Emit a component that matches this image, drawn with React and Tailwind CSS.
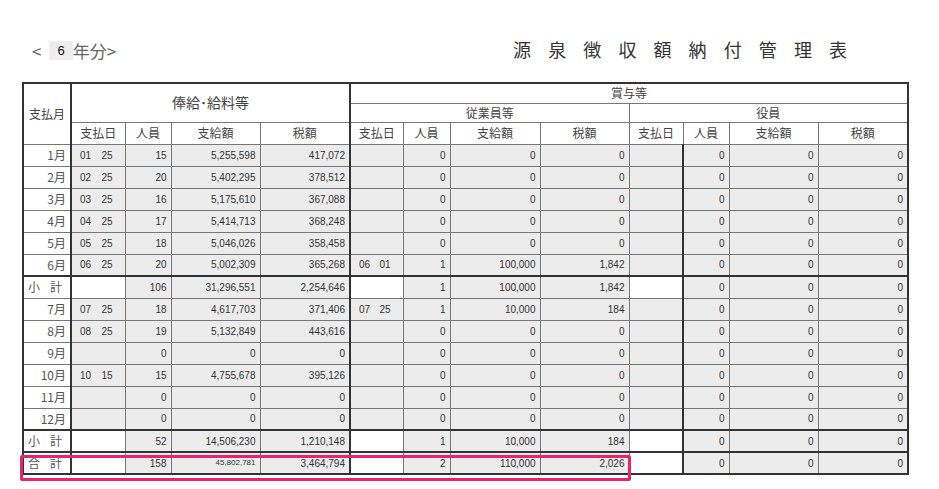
import React from "react";

const cols = [48, 54, 46, 89, 90, 53, 47, 90, 89, 54, 46, 89, 90];

const rows = [
  ["1月", "01", "25", "15", "5,255,598", "417,072", "", "", "0", "0", "0"],
  ["2月", "02", "25", "20", "5,402,295", "378,512", "", "", "0", "0", "0"],
  ["3月", "03", "25", "16", "5,175,610", "367,088", "", "", "0", "0", "0"],
  ["4月", "04", "25", "17", "5,414,713", "368,248", "", "", "0", "0", "0"],
  ["5月", "05", "25", "18", "5,046,026", "358,458", "", "", "0", "0", "0"],
  ["6月", "06", "25", "20", "5,002,309", "365,268", "06", "01", "1", "100,000", "1,842"],
  ["小 計", "", "", "106", "31,296,551", "2,254,646", "", "", "1", "100,000", "1,842", "sub"],
  ["7月", "07", "25", "18", "4,617,703", "371,406", "07", "25", "1", "10,000", "184"],
  ["8月", "08", "25", "19", "5,132,849", "443,616", "", "", "0", "0", "0"],
  ["9月", "", "", "0", "0", "0", "", "", "0", "0", "0"],
  ["10月", "10", "15", "15", "4,755,678", "395,126", "", "", "0", "0", "0"],
  ["11月", "", "", "0", "0", "0", "", "", "0", "0", "0"],
  ["12月", "", "", "0", "0", "0", "", "", "0", "0", "0"],
  ["小 計", "", "", "52", "14,506,230", "1,210,148", "", "", "1", "10,000", "184", "sub"],
  ["合 計", "", "", "158", "45,802,781", "3,464,794", "", "", "2", "110,000", "2,026", "sub"],
];

const jp = { fontFamily: '"Noto Sans CJK JP", sans-serif' };
const num = { fontFamily: '"Liberation Sans", Arial, sans-serif' };

function Day({ a, b, white }) {
  return (
    <td className={`border border-[#777] px-2 text-left ${white ? "bg-white" : "bg-[#ececec]"}`}>
      {a && (
        <span className="flex justify-between pr-1">
          <span>{a}</span>
          <span>{b}</span>
        </span>
      )}
    </td>
  );
}

function N({ v, small, thickRight }) {
  return (
    <td className={`border border-[#777] bg-[#ececec] pr-1 text-right ${small ? "text-[8px]" : ""} ${thickRight ? "border-r-2 border-r-[#333]" : ""}`}>
      {v}
    </td>
  );
}

export default function App() {
  const th = "border border-[#777] font-normal text-[12px] text-[#444] bg-white";
  return (
    <div className="relative h-[489px] w-[939px] bg-white text-[#333]">
      <div className="flex items-end pt-[36px] pl-[32px]">
        <div className="flex items-center text-[17px] text-[#666]" style={jp}>
          <span>&lt;</span>
          <span className="ml-[8px] bg-[#eee] px-[8px] text-[13px] text-[#111]" style={num}>6</span>
          <span>年分&gt;</span>
        </div>
        <div className="ml-[397px] text-[18px] tracking-[0.95em] text-[#333]" style={jp}>源泉徴収額納付管理表</div>
      </div>

      <table className="ml-[22px] mt-[19px] table-fixed border-collapse border-2 border-[#333] text-[10px]" style={num}>
        <colgroup>
          {cols.map((w, i) => (
            <col key={i} style={{ width: w }} />
          ))}
        </colgroup>
        <thead style={jp}>
          <tr className="h-[20px]">
            <th rowSpan={3} className={`${th} border-r-2 border-r-[#333] text-[11px]`}>支払月</th>
            <th colSpan={4} rowSpan={2} className={`${th} border-r-2 border-r-[#333] text-[14px]`}>俸給･給料等</th>
            <th colSpan={8} className={th}>賞与等</th>
          </tr>
          <tr className="h-[18px]">
            <th colSpan={4} className={th}>従業員等</th>
            <th colSpan={4} className={th}>役員</th>
          </tr>
          <tr className="h-[22px]">
            {["支払日", "人員", "支給額", "税額", "支払日", "人員", "支給額", "税額", "支払日", "人員", "支給額", "税額"].map((t, i) => (
              <th key={i} className={`${th} ${i === 3 ? "border-r-2 border-r-[#333]" : ""}`}>{t}</th>
            ))}
          </tr>
        </thead>
        <tbody>
          {rows.map((r, i) => {
            const sub = r[11] === "sub";
            return (
              <tr key={i} className={`h-[22px] ${sub ? "border-t-2 border-t-[#333]" : ""}`}>
                <td className="border border-[#777] border-r-2 border-r-[#333] bg-white pr-1 text-right text-[12px] text-[#555]" style={jp}>
                  {sub ? <span className="block pl-1 text-left tracking-[0.3em]">{r[0]}</span> : r[0]}
                </td>
                <Day a={r[1]} b={r[2]} white={sub} />
                <N v={r[3]} />
                <N v={r[4]} small={i === 14} />
                <N v={r[5]} thickRight />
                <Day a={r[6]} b={r[7]} white={sub} />
                <N v={r[8]} />
                <N v={r[9]} />
                <N v={r[10]} />
                <td className={`border border-[#777] border-r-2 border-r-[#333] ${sub ? "bg-white" : "bg-[#ececec]"}`}></td>
                <N v="0" />
                <N v="0" />
                <N v="0" />
              </tr>
            );
          })}
        </tbody>
      </table>

      <div className="absolute left-[20px] top-[455px] h-[26px] w-[611px] rounded-[2px] border-[3px] border-[#e8246a]"></div>
    </div>
  );
}
